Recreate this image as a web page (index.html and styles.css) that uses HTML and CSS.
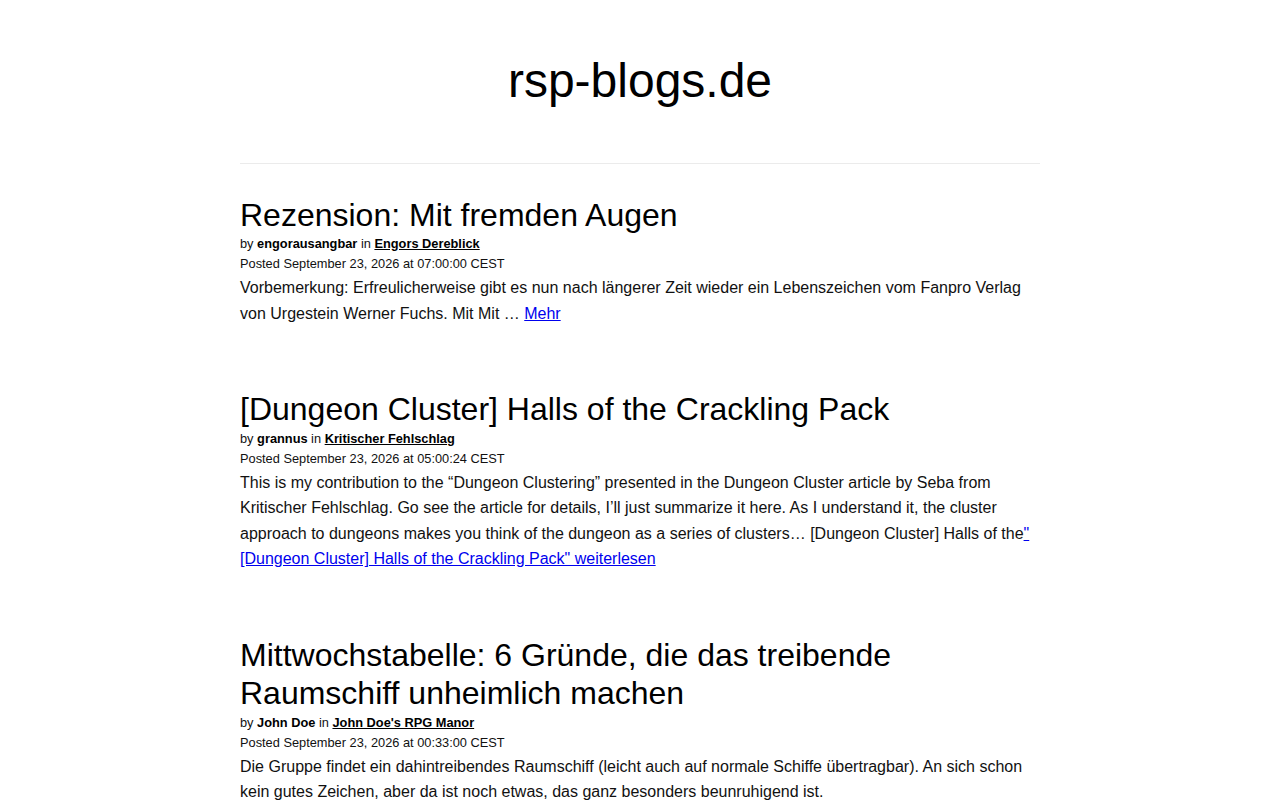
FILE: index.html
```html
<!DOCTYPE html>
<html lang="de">
<head>
<meta charset="utf-8">
<title>rsp-blogs.de</title>
<link rel="stylesheet" href="styles.css">
</head>
<body>
<div class="page">
  <header class="site-header">
    <h1 class="site-title">rsp-blogs.de</h1>
  </header>
  <main class="posts">
    <article class="post">
      <h2 class="post-title">Rezension: Mit fremden Augen</h2>
      <div class="meta">by <strong>engorausangbar</strong> in <a class="blog" href="#">Engors Dereblick</a></div>
      <div class="meta">Posted September 23, 2026 at 07:00:00 CEST</div>
      <p class="excerpt">Vorbemerkung: Erfreulicherweise gibt es nun nach längerer Zeit wieder ein Lebenszeichen vom Fanpro Verlag von Urgestein Werner Fuchs. Mit Mit … <a href="#">Mehr</a></p>
    </article>
    <article class="post">
      <h2 class="post-title">[Dungeon Cluster] Halls of the Crackling Pack</h2>
      <div class="meta">by <strong>grannus</strong> in <a class="blog" href="#">Kritischer Fehlschlag</a></div>
      <div class="meta">Posted September 23, 2026 at 05:00:24 CEST</div>
      <p class="excerpt">This is my contribution to the “Dungeon Clustering” presented in the Dungeon Cluster article by Seba from Kritischer Fehlschlag. Go see the article for details, I’ll just summarize it here. As I understand it, the cluster approach to dungeons makes you think of the dungeon as a series of clusters… [Dungeon Cluster] Halls of the<a href="#">" [Dungeon Cluster] Halls of the Crackling Pack" weiterlesen</a></p>
    </article>
    <article class="post">
      <h2 class="post-title">Mittwochstabelle: 6 Gründe, die das treibende Raumschiff unheimlich machen</h2>
      <div class="meta">by <strong>John Doe</strong> in <a class="blog" href="#">John Doe's RPG Manor</a></div>
      <div class="meta">Posted September 23, 2026 at 00:33:00 CEST</div>
      <p class="excerpt">Die Gruppe findet ein dahintreibendes Raumschiff (leicht auch auf normale Schiffe übertragbar). An sich schon kein gutes Zeichen, aber da ist noch etwas, das ganz besonders beunruhigend ist.</p>
    </article>
  </main>
</div>
</body>
</html>
```

FILE: styles.css
```css
html, body {
  margin: 0;
  padding: 0;
  background: #fff;
}

body {
  font-family: "Liberation Sans", Arial, sans-serif;
  color: #111;
}

.page {
  width: 800px;
  margin: 0 auto;
}

.site-header {
  padding: 52px 0 53px;
  border-bottom: 1px solid #ebebeb;
  text-align: center;
}

.site-title {
  margin: 0;
  font-size: 48px;
  line-height: 57.6px;
  font-weight: normal;
  color: #000;
}

.posts {
  padding-top: 32px;
}

.post {
  margin-bottom: 64px;
}

.post-title {
  margin: 0;
  font-size: 32px;
  line-height: 38.4px;
  font-weight: normal;
  color: #000;
}

.meta {
  font-size: 12.8px;
  line-height: 20.48px;
  color: #111;
}

.meta strong {
  font-weight: bold;
  color: #000;
}

.meta a.blog {
  color: #000;
  font-weight: bold;
  text-decoration: underline;
}

.excerpt {
  margin: 0;
  font-size: 16px;
  line-height: 25.6px;
}

.excerpt a {
  color: #0000ee;
  text-decoration: underline;
}
```
